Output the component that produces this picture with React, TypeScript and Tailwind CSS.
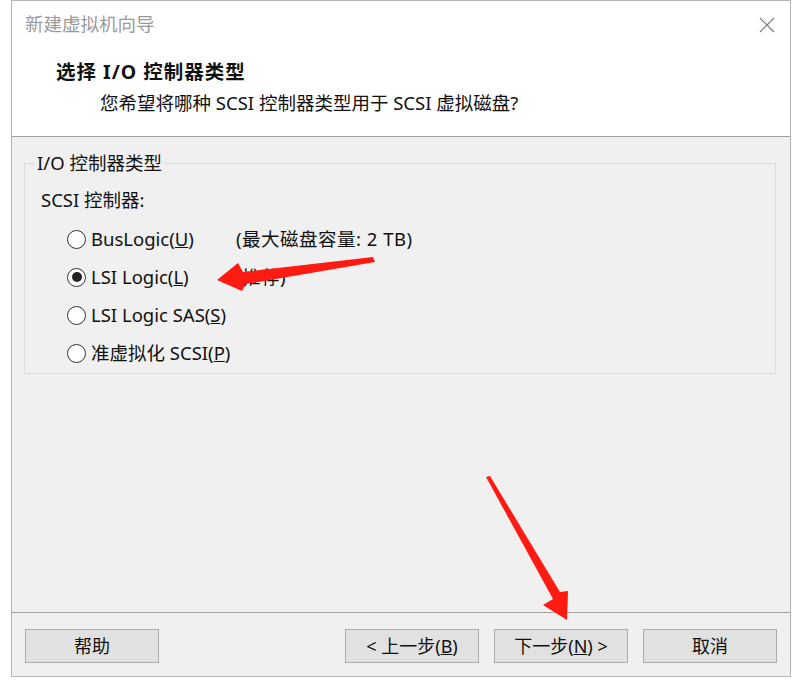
import React from 'react';

const font = { fontFamily: '"Noto Sans", "Noto Sans CJK SC", sans-serif' };

const Radio = ({ checked }: { checked?: boolean }) => (
  <span className="w-[19px] h-[19px] rounded-full border border-[#333] bg-white flex items-center justify-center shrink-0">
    {checked && <span className="w-[10px] h-[10px] rounded-full bg-[#222]" />}
  </span>
);

const options = [
  { label: 'BusLogic(', key: 'U', note: '(最大磁盘容量: 2 TB)' },
  { label: 'LSI Logic(', key: 'L', note: '(推荐)', checked: true },
  { label: 'LSI Logic SAS(', key: 'S' },
  { label: '准虚拟化 SCSI(', key: 'P' },
];

const Btn = ({ children, className = '' }: { children: React.ReactNode; className?: string }) => (
  <div className={`h-[34px] w-[134px] border border-[#adadad] bg-[#e1e1e1] flex items-center justify-center text-[18px] text-[#111] ${className}`}>
    {children}
  </div>
);

export default function App() {
  return (
    <div className="relative w-[802px] h-[688px] bg-white" style={font}>
      <div className="ml-[11px] w-[780px] h-[677px] border border-[#b4b4b4] flex flex-col">
        <div className="h-[136px] bg-white border-b border-[#a0a0a0] relative shrink-0">
          <div className="pl-[13px] pt-[11px] text-[18.5px] text-[#9a9a9a] leading-[24px]">新建虚拟机向导</div>
          <svg className="absolute left-[747px] top-[16px]" width="16" height="16" viewBox="0 0 16 16">
            <path d="M1 1 L15 15 M15 1 L1 15" stroke="#7a7a7a" strokeWidth="1.2" />
          </svg>
          <div className="pl-[44px] pt-[24px] text-[19.5px] font-bold tracking-[1px] text-[#111] leading-[24px]">选择 I/O 控制器类型</div>
          <div className="pl-[88px] pt-[7px] text-[18.5px] text-[#111] leading-[24px]">您希望将哪种 SCSI 控制器类型用于 SCSI 虚拟磁盘?</div>
        </div>
        <div className="flex-1 bg-[#f0f0f0] flex flex-col">
          <div className="mt-[26px] ml-[12px] w-[752px] h-[211px] border border-[#dcdcdc] relative">
            <div className="absolute -top-[13px] left-[10px] px-[2px] bg-[#f0f0f0] text-[18.5px] text-[#111] leading-[24px]">I/O 控制器类型</div>
            <div className="pl-[16px] pt-[24px] text-[18.5px] text-[#111] leading-[24px]">SCSI 控制器:</div>
            <div className="flex flex-col gap-[14px] pl-[42px] pt-[15px]">
              {options.map((o) => (
                <div key={o.key} className="flex items-center h-[24px] text-[18.5px] text-[#111]">
                  <Radio checked={o.checked} />
                  <span className="ml-[5px] w-[145px] whitespace-nowrap">
                    {o.label}
                    <span className="underline">{o.key}</span>)
                  </span>
                  {o.note && <span className="tracking-[0.5px]">{o.note}</span>}
                </div>
              ))}
            </div>
          </div>
          <div className="mt-auto border-t border-[#a0a0a0] h-[64px] flex items-start pt-[16px] px-[13px]">
            <Btn>帮助</Btn>
            <Btn className="ml-auto">&lt; 上一步(<span className="underline">B</span>)</Btn>
            <Btn className="ml-[15px]">下一步(<span className="underline">N</span>) &gt;</Btn>
            <Btn className="ml-[15px]">取消</Btn>
          </div>
        </div>
      </div>
      <svg className="absolute left-0 top-0 pointer-events-none" width="802" height="688">
        <polygon points="217,280 238,263 243,272 373,257 375,262 246,284 242,291" fill="#ff1a12" />
        <polygon points="486,477 490,476 560,592 568,591 567,620 543,605 553,599" fill="#ff1a12" />
      </svg>
    </div>
  );
}
